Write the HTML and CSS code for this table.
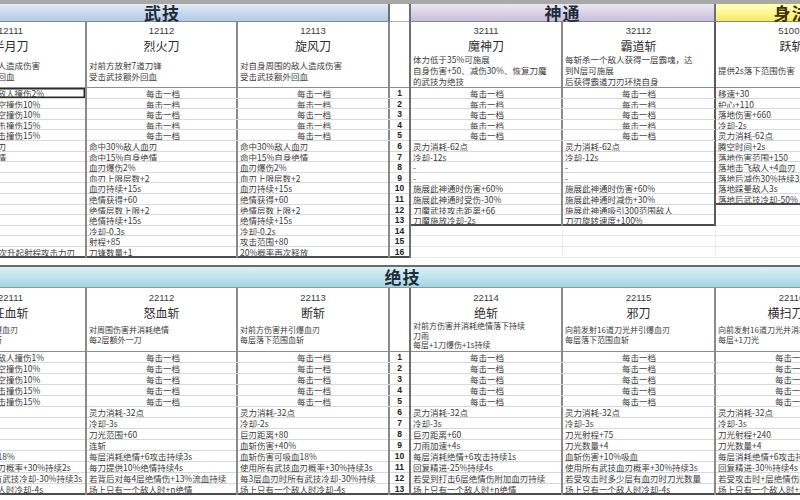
FILE: index.html
```html
<!DOCTYPE html>
<html lang="zh">
<head>
<meta charset="utf-8">
<title>技能表</title>
<link rel="stylesheet" href="styles.css">
</head>
<body>
<div class="sheet">
  <div class="top">
    <div class="grp">
      <div class="ghead blue">武技</div>
      <div class="cols">
        <div class="skill a">
          <div class="sid">12111</div>
          <div class="sname">半月刀</div>
          <div class="sdesc"><div>向前方挥刀对敌人造成伤害</div><div>对流血敌人额外回血</div></div>
          <div class="r sel">每次命中均造成敌人撞伤2%</div>
          <div class="r">每次命中时对浮空撞伤10%</div>
          <div class="r">每次命中时对浮空撞伤10%</div>
          <div class="r">每次命中对其暴击撞伤15%</div>
          <div class="r">每次命中对其暴击撞伤15%</div>
          <div class="r">命中30%敌人血刃</div>
          <div class="r">命中15%自身绝情</div>
          <div class="r">血刃爆伤2%</div>
          <div class="r">血刃上限层数+2</div>
          <div class="r">血刃持续+15s</div>
          <div class="r">绝情获得+60</div>
          <div class="r">绝情层数上限+2</div>
          <div class="r">绝情持续+15s</div>
          <div class="r">冷却-0.3s</div>
          <div class="r">射程+85</div>
          <div class="r last">刀气数量+1，每次升起射程攻击力刃</div>
        </div>
        <div class="skill b">
          <div class="sid">12112</div>
          <div class="sname">烈火刀</div>
          <div class="sdesc"><div>对前方放射7道刀锋</div><div>受击武技额外回血</div></div>
          <div class="r c">每击一档</div>
          <div class="r c">每击一档</div>
          <div class="r c">每击一档</div>
          <div class="r c">每击一档</div>
          <div class="r c">每击一档</div>
          <div class="r">命中30%敌人血刃</div>
          <div class="r">命中15%自身绝情</div>
          <div class="r">血刃爆伤2%</div>
          <div class="r">血刃上限层数+2</div>
          <div class="r">血刃持续+15s</div>
          <div class="r">绝情获得+60</div>
          <div class="r">绝情层数上限+2</div>
          <div class="r">绝情持续+15s</div>
          <div class="r">冷却-0.3s</div>
          <div class="r">射程+85</div>
          <div class="r last">刀锋数量+1</div>
        </div>
        <div class="skill c">
          <div class="sid">12113</div>
          <div class="sname">旋风刀</div>
          <div class="sdesc"><div>对自身周围的敌人造成伤害</div><div>受击武技额外回血</div></div>
          <div class="r c">每击一档</div>
          <div class="r c">每击一档</div>
          <div class="r c">每击一档</div>
          <div class="r c">每击一档</div>
          <div class="r c">每击一档</div>
          <div class="r">命中30%敌人血刃</div>
          <div class="r">命中15%自身绝情</div>
          <div class="r">血刃爆伤2%</div>
          <div class="r">血刃上限层数+2</div>
          <div class="r">血刃持续+15s</div>
          <div class="r">绝情获得+60</div>
          <div class="r">绝情层数上限+2</div>
          <div class="r">绝情持续+15s</div>
          <div class="r">冷却-0.2s</div>
          <div class="r">攻击范围+80</div>
          <div class="r last">20%概率再次释放</div>
        </div>
      </div>
    </div>

    <div class="nums d">
      <div class="nh"></div>
      <div class="nhead"></div>
      <div class="n">1</div><div class="n">2</div><div class="n">3</div><div class="n">4</div>
      <div class="n">5</div><div class="n">6</div><div class="n">7</div><div class="n">8</div>
      <div class="n">9</div><div class="n">10</div><div class="n">11</div><div class="n">12</div>
      <div class="n">13</div><div class="n">14</div><div class="n">15</div><div class="n last">16</div>
    </div>

    <div class="grp">
      <div class="ghead lilac">神通</div>
      <div class="cols">
        <div class="skill e">
          <div class="sid">32111</div>
          <div class="sname">魔神刀</div>
          <div class="sdesc three"><div>体力低于35%可施展</div><div>自身伤害+50、减伤30%、恢复刀魔</div><div>的武技为绝技</div></div>
          <div class="r c">每击一档</div>
          <div class="r c">每击一档</div>
          <div class="r c">每击一档</div>
          <div class="r c">每击一档</div>
          <div class="r c">每击一档</div>
          <div class="r">灵力消耗-62点</div>
          <div class="r">冷却-12s</div>
          <div class="r">-</div>
          <div class="r">-</div>
          <div class="r">施展此神通时伤害+60%</div>
          <div class="r">施展此神通时受伤-30%</div>
          <div class="r">刀魔武技攻击距离+66</div>
          <div class="r last">刀魔施放冷却-2s</div>
        </div>
        <div class="skill f dark">
          <div class="sid">32112</div>
          <div class="sname">霸道斩</div>
          <div class="sdesc three"><div>每斩杀一个敌人获得一层霸魂，达</div><div>到N层可施展</div><div>后获得霸道刀刃环绕自身</div></div>
          <div class="r c">每击一档</div>
          <div class="r c">每击一档</div>
          <div class="r c">每击一档</div>
          <div class="r c">每击一档</div>
          <div class="r c">每击一档</div>
          <div class="r">灵力消耗-62点</div>
          <div class="r">冷却-12s</div>
          <div class="r">-</div>
          <div class="r">-</div>
          <div class="r">施展此神通时伤害+60%</div>
          <div class="r">施展此神通时减伤+30%</div>
          <div class="r">施展此神通吸引300范围敌人</div>
          <div class="r last">刀刃旋转速度+100%</div>
        </div>
      </div>
      <div class="fill">
        <div class="fr"><span class="e"></span><span class="f"></span></div>
        <div class="fr"><span class="e"></span><span class="f"></span></div>
        <div class="fr"><span class="e"></span><span class="f"></span></div>
      </div>
    </div>

    <div class="grp">
      <div class="ghead yellow">身法</div>
      <div class="cols">
        <div class="skill g dark">
          <div class="sid">51001</div>
          <div class="sname">跃斩</div>
          <div class="sdesc"><div>提供2s落下范围伤害</div></div>
          <div class="r">移速+30</div>
          <div class="r">护心+110</div>
          <div class="r">落地伤害+660</div>
          <div class="r">冷却-2s</div>
          <div class="r">灵力消耗-62点</div>
          <div class="r">腾空时间+2s</div>
          <div class="r">落地伤害范围+150</div>
          <div class="r">落地击飞敌人+4血刃</div>
          <div class="r">落地后减伤30%持续3s</div>
          <div class="r">落地踩晕敌人3s</div>
          <div class="r last">落地后武技冷却-50%</div>
        </div>
      </div>
      <div class="fill">
        <div class="fr"><span class="g"></span></div>
        <div class="fr"><span class="g"></span></div>
        <div class="fr"><span class="g"></span></div>
        <div class="fr"><span class="g"></span></div>
        <div class="fr"><span class="g"></span></div>
      </div>
    </div>
  </div>

  <div class="bottom">
    <div class="bhead">绝技</div>
    <div class="cols">
      <div class="skill a">
        <div class="sid">22111</div>
        <div class="sname">狂血斩</div>
        <div class="sdesc"><div>对前方伤害并引爆血刃</div><div>每层落下范围血斩</div></div>
        <div class="r">每次命中均造成敌人撞伤1%</div>
        <div class="r">每次命中时对浮空撞伤10%</div>
        <div class="r">每次命中时对浮空撞伤10%</div>
        <div class="r">每次命中对其暴击撞伤15%</div>
        <div class="r">每次命中对其暴击撞伤15%</div>
        <div class="r">灵力消耗-32点</div>
        <div class="r">冷却-2s</div>
        <div class="r">巨刃距离+80</div>
        <div class="r">血斩伤害+40%</div>
        <div class="r">血斩伤害可吸血18%</div>
        <div class="r">使用所有武技血刃概率+30%持续2s</div>
        <div class="r">每3层血刃时所有武技冷却-30%持续3s</div>
        <div class="r last">场上只有一个敌人时冷却-4s</div>
      </div>
      <div class="skill b">
        <div class="sid">22112</div>
        <div class="sname">怒血斩</div>
        <div class="sdesc"><div>对周围伤害并消耗绝情</div><div>每2层额外一刀</div></div>
        <div class="r c">每击一档</div>
        <div class="r c">每击一档</div>
        <div class="r c">每击一档</div>
        <div class="r c">每击一档</div>
        <div class="r c">每击一档</div>
        <div class="r">灵力消耗-32点</div>
        <div class="r">冷却-3s</div>
        <div class="r">刀光范围+60</div>
        <div class="r">连斩</div>
        <div class="r">每层消耗绝情+6攻击持续3s</div>
        <div class="r">每刀提供10%绝情持续4s</div>
        <div class="r">若背后对每4层绝情伤+13%流血持续</div>
        <div class="r last">场上只有一个敌人时+n绝情</div>
      </div>
      <div class="skill c">
        <div class="sid">22113</div>
        <div class="sname">断斩</div>
        <div class="sdesc"><div>对前方伤害并引爆血刃</div><div>每层落下范围血斩</div></div>
        <div class="r c">每击一档</div>
        <div class="r c">每击一档</div>
        <div class="r c">每击一档</div>
        <div class="r c">每击一档</div>
        <div class="r c">每击一档</div>
        <div class="r">灵力消耗-32点</div>
        <div class="r">冷却-2s</div>
        <div class="r">巨刃距离+80</div>
        <div class="r">血斩伤害+40%</div>
        <div class="r">血斩伤害可吸血18%</div>
        <div class="r">使用所有武技血刃概率+30%持续3s</div>
        <div class="r">每3层血刃时所有武技冷却-30%持续</div>
        <div class="r last">场上只有一个敌人时冷却-4s</div>
      </div>
      <div class="nums d">
        <div class="nhead"></div>
        <div class="n">1</div><div class="n">2</div><div class="n">3</div><div class="n">4</div>
        <div class="n">5</div><div class="n">6</div><div class="n">7</div><div class="n">8</div>
        <div class="n">9</div><div class="n">10</div><div class="n">11</div><div class="n">12</div>
        <div class="n last">13</div>
      </div>
      <div class="skill e">
        <div class="sid">22114</div>
        <div class="sname">绝斩</div>
        <div class="sdesc three"><div>对前方伤害并消耗绝情落下持续</div><div>刀雨</div><div>每层+1刀爆伤+1s持续</div></div>
        <div class="r c">每击一档</div>
        <div class="r c">每击一档</div>
        <div class="r c">每击一档</div>
        <div class="r c">每击一档</div>
        <div class="r c">每击一档</div>
        <div class="r">灵力消耗-32点</div>
        <div class="r">冷却-3s</div>
        <div class="r">巨刃距离+60</div>
        <div class="r">刀雨加速+4s</div>
        <div class="r">每层消耗绝情+6攻击持续1s</div>
        <div class="r">回复精进-25%持续4s</div>
        <div class="r">若受到打击6层绝情伤附加血刃持续</div>
        <div class="r last">场上只有一个敌人时+n绝情</div>
      </div>
      <div class="skill f">
        <div class="sid">22115</div>
        <div class="sname">邪刀</div>
        <div class="sdesc"><div>向前发射16道刀光并引爆血刃</div><div>每层落下范围血斩</div></div>
        <div class="r c">每击一档</div>
        <div class="r c">每击一档</div>
        <div class="r c">每击一档</div>
        <div class="r c">每击一档</div>
        <div class="r c">每击一档</div>
        <div class="r">灵力消耗-32点</div>
        <div class="r">冷却-3s</div>
        <div class="r">刀光射程+75</div>
        <div class="r">刀光数量+4</div>
        <div class="r">血斩伤害+10%吸血</div>
        <div class="r">使用所有武技血刃概率+30%持续3s</div>
        <div class="r">若受攻击时多少层有血刃时刀光数量</div>
        <div class="r last">场上只有一个敌人时冷却-4s</div>
      </div>
      <div class="skill g">
        <div class="sid">22116</div>
        <div class="sname">横扫刀光</div>
        <div class="sdesc"><div>向前发射16道刀光并消耗绝情</div><div>每层+1刀光</div></div>
        <div class="r c">每击一档</div>
        <div class="r c">每击一档</div>
        <div class="r c">每击一档</div>
        <div class="r c">每击一档</div>
        <div class="r c">每击一档</div>
        <div class="r">灵力消耗-32点</div>
        <div class="r">冷却-3s</div>
        <div class="r">刀光射程+240</div>
        <div class="r">刀光数量+4</div>
        <div class="r">每层消耗绝情+6攻击持续3s</div>
        <div class="r">回复精进-30%持续4s</div>
        <div class="r">若受攻击时+层绝情伤附加血刃</div>
        <div class="r last">场上只有一个敌人时+n绝情</div>
      </div>
    </div>
  </div>
</div>
</body>
</html>
```

FILE: styles.css
```css
* { box-sizing: border-box; }
html, body { margin: 0; padding: 0; }
body {
  width: 800px;
  height: 500px;
  overflow: hidden;
  background: #ffffff;
  font-family: "Noto Sans CJK SC", "Noto Sans", sans-serif;
  color: #3b3b3b;
}
.sheet {
  margin-left: -64px;
  width: 933px;
  border-top: 4px solid #a8a8a8;
}
.top { display: flex; align-items: flex-start; }
.grp { display: flex; flex-direction: column; }
.cols { display: flex; align-items: flex-start; }

.a { width: 151px; }
.b { width: 151px; }
.c { width: 152px; }
.d { width: 21px; }
.e { width: 152px; }
.f { width: 153px; }
.g { width: 153px; }

.ghead {
  height: 18px;
  display: flex;
  align-items: center;
  justify-content: center;
  font-size: 17px;
  font-weight: 700;
  color: #1f2b3b;
  border-right: 2px solid #6f6f6f;
  border-bottom: 1px solid #7d8a9c;
  letter-spacing: 1px;
}
.blue { background: linear-gradient(#e2ebf6, #c6d8ef 55%, #b4c9e4); }
.lilac { background: linear-gradient(#ebe7f1, #d9d2e6 55%, #c8bdd9); }
.yellow { background: linear-gradient(#ffffc4, #fdf68e 55%, #f3e86e); color: #3a2e00; }

.skill {
  display: flex;
  flex-direction: column;
  border-right: 2px solid #8a8a8a;
}
.skill.dark { border-right-color: #5a5a5a; }
.sid {
  height: 16px;
  font-size: 9.5px;
  line-height: 18px;
  text-align: center;
  font-family: "Liberation Sans", "Noto Sans CJK SC", sans-serif;
}
.sname {
  height: 16px;
  font-size: 12px;
  line-height: 16px;
  text-align: center;
  color: #2e2e2e;
}
.sdesc {
  height: 34px;
  font-size: 8.5px;
  line-height: 11px;
  padding-left: 2px;
  display: flex;
  flex-direction: column;
  justify-content: center;
  white-space: nowrap;
  overflow: hidden;
  border-bottom: 1px solid #8c8c8c;
}
.r {
  height: 10.6px;
  font-size: 8.5px;
  line-height: 10px;
  padding-left: 2px;
  white-space: nowrap;
  overflow: hidden;
  border-bottom: 1px solid #d8d8d8;
}
.r.c { text-align: center; padding-left: 0; }
.r.last { border-bottom: 2px solid #4d4d4d; }
.r.sel { box-shadow: inset 0 0 0 1.5px #2c2c2c; }

.nums {
  display: flex;
  flex-direction: column;
  border-right: 2px solid #6f6f6f;
}
.nh { height: 18px; border-bottom: 1px solid #b0b0b0; }
.nhead { height: 66px; border-bottom: 1px solid #8c8c8c; }
.n {
  height: 10.6px;
  font-size: 8.5px;
  line-height: 10px;
  font-weight: 700;
  text-align: center;
  color: #222;
  font-family: "Liberation Sans", sans-serif;
  border-bottom: 1px solid #d8d8d8;
}
.n.last { border-bottom: 2px solid #4d4d4d; }

.fill { display: flex; flex-direction: column; }
.fr { display: flex; height: 10.6px; border-bottom: 1px solid #e8e8e8; }
.fr span { height: 100%; border-right: 1px solid #ececec; }

.bottom {
  margin-top: 7px;
  border-top: 2px solid #6b6b6b;
}
.bhead {
  height: 21px;
  display: flex;
  align-items: center;
  justify-content: center;
  font-size: 17px;
  font-weight: 700;
  letter-spacing: 1px;
  color: #1f2b3b;
  background: linear-gradient(#dcf0f6, #bde2ec 55%, #a8d3e1);
  border-bottom: 1px solid #7f9fab;
}
.bottom .sid { height: 18px; line-height: 20px; }
.bottom .sname { height: 14px; line-height: 14px; }
.bottom .sdesc { height: 32px; font-size: 8px; line-height: 10.5px; }
.bottom .sdesc.three { line-height: 9.5px; justify-content: flex-end; padding-bottom: 1px; }
.bottom .r { height: 11px; line-height: 10.5px; }
.bottom .nhead { height: 64px; }
.bottom .n { height: 11px; line-height: 10.5px; }
```
